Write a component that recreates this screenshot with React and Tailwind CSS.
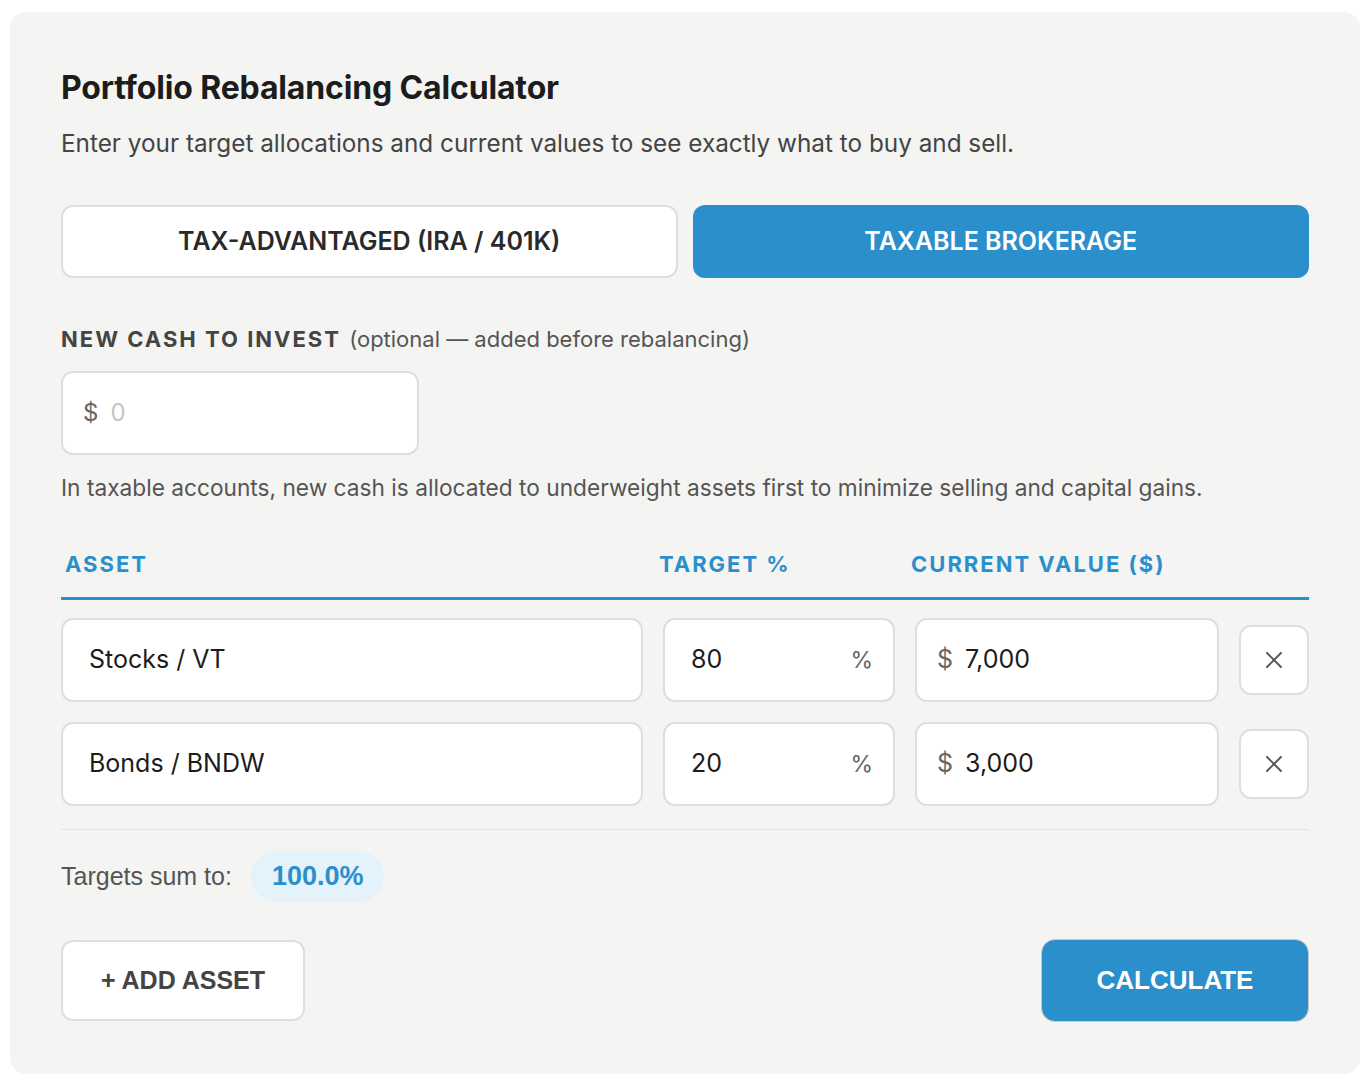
import React from 'react';
import { X } from 'lucide-react';

const assets = [
  { name: 'Stocks / VT', target: '80', value: '7,000' },
  { name: 'Bonds / BNDW', target: '20', value: '3,000' },
];

const App = () => {
  return (
    <div className="min-h-screen bg-white pt-3 pl-[10px] font-['Inter',sans-serif] overflow-hidden">
      <div className="w-[1350px] rounded-2xl bg-[#f4f4f2] px-[51px] pt-[57px] pb-[52px]">
        <h1 className="text-[32px] leading-[38px] font-bold text-[#1c1c1c] tracking-[-0.15px]">
          Portfolio Rebalancing Calculator
        </h1>
        <p className="mt-[20px] text-[24.3px] leading-[32px] text-[#444]">
          Enter your target allocations and current values to see exactly what to buy and sell.
        </p>

        {/* Account type toggle */}
        <div className="mt-[46px] grid grid-cols-2 gap-[15px]">
          <button className="h-[73px] rounded-xl border-2 border-[#dedede] bg-white text-[25px] font-semibold uppercase text-[#2a2a2a]">
            Tax-Advantaged (IRA / 401K)
          </button>
          <button className="h-[73px] rounded-xl bg-[#2b8fcb] text-[25px] font-semibold uppercase text-white">
            Taxable Brokerage
          </button>
        </div>

        {/* New cash */}
        <div className="mt-[46px] text-[22px] leading-[30px] text-[#555]">
          <span className="font-bold tracking-[2px] text-[#444]">NEW CASH TO INVEST</span>{' '}
          <span className="ml-0.5">(optional — added before rebalancing)</span>
        </div>
        <div className="mt-[17px] flex h-[84px] w-[358px] items-center rounded-xl border-2 border-[#dedede] bg-white px-5 text-[24px]">
          <span className="text-[#666]">$</span>
          <span className="ml-3 text-[#c4c4c4]">0</span>
        </div>
        <p className="mt-[18px] text-[22.7px] leading-[30px] text-[#555]">
          In taxable accounts, new cash is allocated to underweight assets first to minimize selling and capital gains.
        </p>

        {/* Table header */}
        <div className="mt-[46px] grid grid-cols-[582px_232px_304px_70px] gap-x-5 border-b-[3px] border-[#2b8fcb] pb-[18px] text-[22px] leading-[30px] font-bold uppercase tracking-[2px] text-[#2b8fcb]">
          <div className="pl-1">Asset</div>
          <div className="-ml-1">Target %</div>
          <div className="-ml-1">Current Value ($)</div>
          <div></div>
        </div>

        {/* Rows */}
        <div className="mt-[18px] flex flex-col gap-5">
          {assets.map((a) => (
            <div key={a.name} className="grid grid-cols-[582px_232px_304px_70px] items-center gap-x-5">
              <div className="flex h-[84px] items-center rounded-xl border-2 border-[#dedede] bg-white px-[26px] text-[25px] text-[#1c1c1c]">
                {a.name}
              </div>
              <div className="flex h-[84px] items-center justify-between rounded-xl border-2 border-[#dedede] bg-white pl-[26px] pr-5 text-[25px] text-[#1c1c1c]">
                <span>{a.target}</span>
                <span className="text-[23px] text-[#666]">%</span>
              </div>
              <div className="flex h-[84px] items-center rounded-xl border-2 border-[#dedede] bg-white px-5 text-[25px] text-[#1c1c1c]">
                <span className="text-[#666]">$</span>
                <span className="ml-3">{a.value}</span>
              </div>
              <button className="flex h-[70px] w-[70px] items-center justify-center rounded-xl border-2 border-[#dedede] bg-white text-[#555]">
                <X size={28} strokeWidth={1.6} />
              </button>
            </div>
          ))}
        </div>

        <div className="mt-[23px] h-px bg-[#e2e2e2]"></div>

        <div className="mt-[21px] flex items-center gap-[19px]">
          <span className="font-['Liberation_Sans',sans-serif] text-[25px] text-[#555]">Targets sum to:</span>
          <span className="flex h-[51px] items-center rounded-full bg-[#e3f2fb] px-[21px] font-['Liberation_Sans',sans-serif] text-[27px] font-bold text-[#2b8fcb]">
            100.0%
          </span>
        </div>

        <div className="mt-[37px] flex items-center justify-between">
          <button className="h-[81px] w-[244px] rounded-xl border-2 border-[#dedede] bg-white font-['Liberation_Sans',sans-serif] text-[25px] font-bold text-[#444]">
            + ADD ASSET
          </button>
          <button className="h-[83px] w-[268px] rounded-[14px] border border-[#c9c9c9] bg-[#2b8fcb] font-['Liberation_Sans',sans-serif] text-[26px] font-bold text-white">
            CALCULATE
          </button>
        </div>
      </div>
    </div>
  );
};

export default App;
